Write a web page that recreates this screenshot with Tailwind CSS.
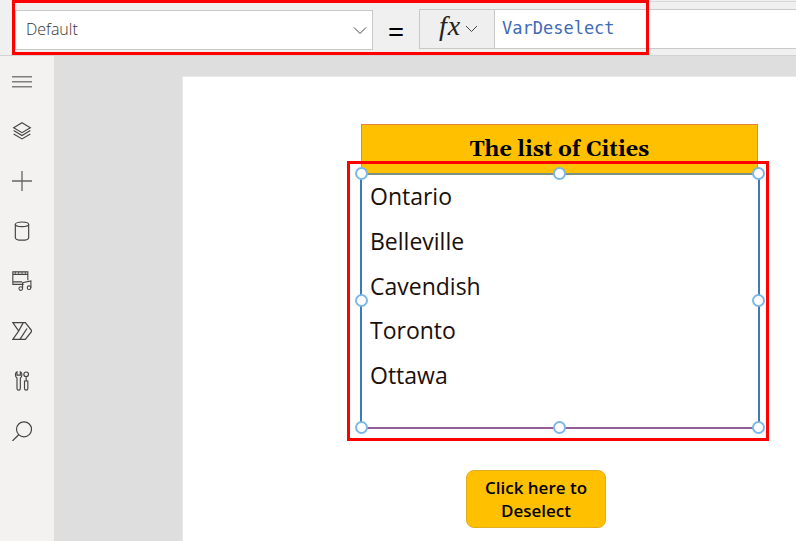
<!DOCTYPE html>
<html lang="en">
<head>
<meta charset="UTF-8">
<title>Power Apps formula bar</title>
<script src="https://cdn.jsdelivr.net/npm/@tailwindcss/browser@4"></script>
</head>
<body class="relative w-[796px] h-[541px] overflow-hidden bg-white font-['Open_Sans',sans-serif]">
  <!-- formula bar -->
  <header class="h-[56px] bg-[#f0f0f0] border-b border-[#d2d2d2] flex items-start pt-[9px] pl-[15px]">
    <div class="w-[358px] h-[40px] mt-[1px] bg-white border border-[#c8c8c8] flex items-center justify-between pl-[10px] pr-[3px]">
      <span class="text-[16px] font-light text-[#333] -mt-[2px]">Default</span>
      <svg class="w-[14px] h-[14px] mr-[2px] -mt-[1px]" viewBox="0 0 16 16" fill="none" stroke="#444" stroke-width="1.100"><path d="M1 5l7 7 7-7"/></svg>
    </div>
    <div class="w-[46px] text-center text-[29px] leading-[44px] font-normal text-black">=</div>
    <div class="w-[76px] h-[40px] bg-[#efefef] border border-[#c8c8c8] flex items-center pl-[19px]">
      <span class="font-['Liberation_Serif',serif] italic text-[28px] leading-none text-[#222] -mt-[6px] tracking-[1px]">fx</span>
      <svg class="w-[13px] h-[13px] ml-[4px] -mt-[2px]" viewBox="0 0 13 13" fill="none" stroke="#444" stroke-width="1"><path d="M1 4l5.500 5.500L12 4"/></svg>
    </div>
    <div class="flex-1 h-[40px] bg-white border-y border-[#c8c8c8] pl-[7px] font-['DejaVu_Sans_Mono',monospace] text-[17px] leading-[36px] text-[#3f6ab5]">VarDeselect</div>
  </header>
  <div class="absolute left-[648px] top-[1px] right-0 h-[1px] bg-[#d8d8d8]"></div>

  <div class="flex h-[485px]">
    <!-- left rail -->
    <nav class="w-[54px] bg-[#f3f2f1] flex flex-col items-start pl-[12px] pt-[15px] gap-[30px] text-[#444]">
      <svg class="w-[20px] h-[20px]" viewBox="0 0 24 24" fill="none" stroke="currentColor" stroke-width="1.200"><path d="M0 7h24M0 13h24M0 19h24"/></svg>
      <svg class="w-[20px] h-[20px]" viewBox="0 0 24 24" fill="none" stroke="currentColor" stroke-width="1.400"><path d="M12 2l10 6-10 6L2 8zM2 11.500l10 6 10-6M2 15.500l10 6 10-6"/></svg>
      <svg class="w-[20px] h-[20px]" viewBox="0 0 24 24" fill="none" stroke="#666" stroke-width="1.600"><path d="M12 0v24M0 12h24"/></svg>
      <svg class="w-[20px] h-[20px]" viewBox="0 0 24 24" fill="none" stroke="currentColor" stroke-width="1.400"><ellipse cx="12" cy="4" rx="8" ry="2.800"/><path d="M4 4v16c0 1.700 3.500 3 8 3s8-1.300 8-3V4"/></svg>
      <svg class="w-[20px] h-[20px]" viewBox="0 0 24 24" fill="none" stroke="currentColor" stroke-width="1.300"><path d="M14 16H1V1h18v10M1 4h18M1 13h11"/><path d="M4 1v3M8 1v3M12 1v3M16 1v3" stroke-width="1"/><circle cx="10.500" cy="21" r="2.200"/><circle cx="20.500" cy="20" r="2.200"/><path d="M12.700 21v-7l10-2v8"/></svg>
      <svg class="w-[20px] h-[20px]" viewBox="0 0 24 24" fill="none" stroke="currentColor" stroke-width="1.500"><path d="M1 2h15l8 10-8 10H1l7-10zM8 12l5.500-10M9.500 22l8.500-13"/></svg>
      <svg class="w-[20px] h-[20px]" viewBox="0 0 24 24" fill="none" stroke="currentColor" stroke-width="1.400"><path d="M6 1C3.500 2 3.500 7 6 8.500V21a2 2 0 0 0 4 0V8.500C12.500 7 12.500 2 10 1v4H6zM17 7.500V12h-2v9a2 2 0 0 0 4 0v-9h-2"/><circle cx="17" cy="4" r="2.800"/></svg>
      <svg class="w-[20px] h-[20px]" viewBox="0 0 24 24" fill="none" stroke="currentColor" stroke-width="1.400"><circle cx="14.400" cy="10" r="9"/><path d="M8 16.500L0.500 24"/></svg>
    </nav>

    <!-- canvas -->
    <main class="flex-1 bg-[#dedede] pt-[20px] pl-[128px]">
      <div class="h-[470px] bg-white border-l border-t border-[#e8e8e8]"></div>
    </main>
  </div>

  <!-- controls placed on the canvas -->
  <div class="absolute left-[361px] top-[124px] w-[397px] h-[50px] bg-[#ffc000] border border-[#e9823a] flex items-center justify-center pt-[2px]">
    <span class="font-['Gelasio','DejaVu_Serif',serif] font-bold text-[21.800px] text-black">The list of Cities</span>
  </div>
  <div class="absolute left-[360px] top-[173px] w-[400px] h-[256px] bg-white border-x-2 border-[#3a7cb8] border-t-2 border-b-2 border-t-[#7f8f80] border-b-[#8f5f96] pl-[8px] text-[23px] leading-[44.800px] text-[#1a0f0a]">
    <div class="-mt-[1px]">Ontario</div>
    <div>Belleville</div>
    <div>Cavendish</div>
    <div>Toronto</div>
    <div>Ottawa</div>
  </div>

  <!-- selection handles -->
  <span class="absolute left-[355px] top-[167px] w-[13px] h-[13px] rounded-full bg-white border-2 border-[#7ab8ea]"></span>
  <span class="absolute left-[553px] top-[167px] w-[13px] h-[13px] rounded-full bg-white border-2 border-[#7ab8ea]"></span>
  <span class="absolute left-[752px] top-[167px] w-[13px] h-[13px] rounded-full bg-white border-2 border-[#7ab8ea]"></span>
  <span class="absolute left-[355px] top-[294px] w-[13px] h-[13px] rounded-full bg-white border-2 border-[#7ab8ea]"></span>
  <span class="absolute left-[752px] top-[294px] w-[13px] h-[13px] rounded-full bg-white border-2 border-[#7ab8ea]"></span>
  <span class="absolute left-[355px] top-[421px] w-[13px] h-[13px] rounded-full bg-white border-2 border-[#7ab8ea]"></span>
  <span class="absolute left-[553px] top-[421px] w-[13px] h-[13px] rounded-full bg-white border-2 border-[#7ab8ea]"></span>
  <span class="absolute left-[752px] top-[421px] w-[13px] h-[13px] rounded-full bg-white border-2 border-[#7ab8ea]"></span>

  <button class="absolute left-[466px] top-[470px] w-[140px] h-[58px] rounded-[8px] bg-[#ffc000] border border-[#e3ad1c] text-[17px] leading-[23px] font-semibold text-black">Click here to<br>Deselect</button>

  <!-- red annotation boxes -->
  <div class="absolute left-[12px] top-0 w-[637px] h-[55px] border-[3px] border-[#ff0000]"></div>
  <div class="absolute left-[347px] top-[161px] w-[422px] h-[280px] border-[3px] border-[#ff0000]"></div>
</body>
</html>
